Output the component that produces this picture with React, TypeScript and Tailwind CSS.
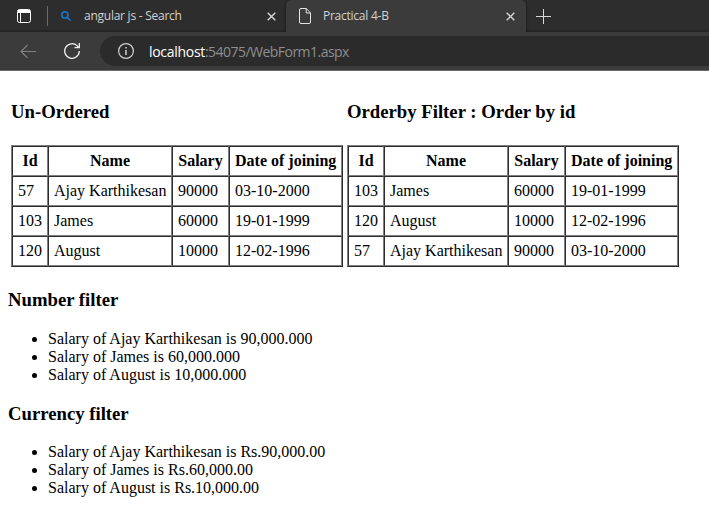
type Employee = { id: number; name: string; salary: string; joined: string };

const employees: Employee[] = [
  { id: 57, name: 'Ajay Karthikesan', salary: '90000', joined: '03-10-2000' },
  { id: 103, name: 'James', salary: '60000', joined: '19-01-1999' },
  { id: 120, name: 'August', salary: '10000', joined: '12-02-1996' },
];

const orderedEmployees = [employees[1], employees[2], employees[0]];

const cell =
  'border border-t-[#2c2c2c] border-l-[#2c2c2c] border-b-[#808080] border-r-[#808080] p-[5px] whitespace-nowrap';

function EmployeeTable({ title, rows }: { title: string; rows: Employee[] }) {
  return (
    <section className="w-[332px]">
      <h3 className="mb-[22px] text-[18.72px] leading-[22px] font-bold whitespace-nowrap">{title}</h3>
      <table className="w-[332px] table-fixed border-separate border-spacing-0 border border-t-[#808080] border-l-[#808080] border-r-[#2c2c2c] border-b-[#2c2c2c] text-[16px] leading-[18px]">
        <colgroup>
          <col className="w-[36px]" />
          <col className="w-[124px]" />
          <col className="w-[57px]" />
          <col className="w-[113px]" />
        </colgroup>
        <thead>
          <tr>
            <th className={cell}>Id</th>
            <th className={cell}>Name</th>
            <th className={cell}>Salary</th>
            <th className={cell}>Date of joining</th>
          </tr>
        </thead>
        <tbody>
          {rows.map((row) => (
            <tr key={row.id}>
              <td className={cell}>{row.id}</td>
              <td className={cell}>{row.name}</td>
              <td className={cell}>{row.salary}</td>
              <td className={cell}>{row.joined}</td>
            </tr>
          ))}
        </tbody>
      </table>
    </section>
  );
}

function FilterList({ title, items, headingGap }: { title: string; items: string[]; headingGap: string }) {
  return (
    <section>
      <h3 className={`${headingGap} text-[18.72px] leading-[22px] font-bold`}>{title}</h3>
      <ul className="list-disc pl-10 text-[16px] leading-[18px]">
        {items.map((item) => (
          <li key={item}>{item}</li>
        ))}
      </ul>
    </section>
  );
}

function CloseIcon() {
  return (
    <svg className="size-[9px]" viewBox="0 0 9 9" fill="none" stroke="#d2d2d2" strokeWidth="1.5">
      <path d="M.7.7l7.6 7.6M8.3.7.7 8.3" />
    </svg>
  );
}

export default function App() {
  return (
    <div className="h-[519px] w-[709px] overflow-hidden bg-white text-black">
      <div className="font-['Open_Sans','Noto_Sans',sans-serif]">
        <div className="flex h-8 items-center bg-[#2b2b2b] bg-linear-to-b from-[#2d2d2d] from-90% to-[#232323] text-[12px] text-[#d2d2d2]">
          <svg className="ml-[17px] h-[14px] w-[14px] shrink-0" viewBox="0 0 14 14" fill="none" stroke="#fff">
            <rect x=".5" y=".5" width="13" height="13" rx="2" />
            <path d="M1 1.5h12M1 2.5h12M1 3.5h12M3.5 4v9.5" />
          </svg>
          <div className="ml-4 h-5 w-px shrink-0 bg-[#6b6b6b]" />
          <div className="flex h-8 w-[238px] shrink-0 items-center pr-[10px] pl-[13px]">
            <svg className="size-[10px]" viewBox="0 0 10 10" fill="none" stroke="#1677cb" strokeWidth="1.6">
              <circle cx="3.9" cy="3.9" r="3.1" />
              <path d="M6.2 6.2l3.4 3.4" />
            </svg>
            <span className="ml-[13px] flex-1 tracking-[-0.25px] whitespace-nowrap">angular js - Search</span>
            <CloseIcon />
          </div>
          <div className="flex h-8 w-[240px] shrink-0 items-center rounded-t-[5px] bg-[#3b3b3b] pr-[11px] pl-[13px] shadow-[0_0_3px_#111]">
            <svg className="h-4 w-3" viewBox="0 0 12 16" fill="none" stroke="#e3e3e3">
              <path d="M2 .5h5.2l4.3 4.3V14a1.5 1.5 0 0 1-1.5 1.5H2A1.5 1.5 0 0 1 .5 14V2A1.5 1.5 0 0 1 2 .5zM7.2.5V5h4.3" />
            </svg>
            <span className="ml-3 flex-1 tracking-[-0.25px] whitespace-nowrap">Practical 4-B</span>
            <CloseIcon />
          </div>
          <svg className="ml-[10px] size-[15px]" viewBox="0 0 15 15" fill="none" stroke="#d8d8d8">
            <path d="M7.5 0v15M0 7.5h15" />
          </svg>
        </div>
        <div className="relative flex h-[39px] items-center border-b border-[#6a6a6a] bg-[#3b3b3b]">
          <svg className="ml-5 h-[14px] w-4 shrink-0" viewBox="0 0 16 14" fill="none" stroke="#808080" strokeWidth="1.1">
            <path d="M16 7.5H1M7.5 1 1 7.5 7.5 14" />
          </svg>
          <svg className="ml-7 size-4 shrink-0" viewBox="0 0 16 16" fill="none" stroke="#f0f0f0" strokeWidth="1.3">
            <path d="M15.3 8A7.3 7.3 0 1 1 13.2 2.9L14.8 4.5M15.3 0v4.6h-4.8" />
          </svg>
          <div className="ml-5 flex h-[30px] flex-1 items-center rounded-l-full bg-[#2b2b2b] pl-[18px]">
            <svg className="size-4 shrink-0" viewBox="0 0 16 16" fill="none" stroke="#d0d0d0" strokeWidth="1.2">
              <circle cx="8" cy="8" r="7.4" />
              <path d="M8 7v5M8 4v1.5" strokeWidth="1.5" />
            </svg>
            <span className="ml-[15px] text-[14px] tracking-[-0.53px] whitespace-nowrap text-[#8e8e8e]">
              <span className="tracking-[-0.3px] text-white">localhost</span>:54075/WebForm1.aspx
            </span>
          </div>
        </div>
      </div>

      <main className="px-2 pt-[30px] font-['Liberation_Serif',serif]">
        <div className="flex gap-1 px-[3px]">
          <EmployeeTable title="Un-Ordered" rows={employees} />
          <EmployeeTable title="Orderby Filter : Order by id" rows={orderedEmployees} />
        </div>
        <div className="mt-[22px] flex flex-col gap-[19px]">
          <FilterList
            title="Number filter"
            headingGap="mb-[19px]"
            items={[
              'Salary of Ajay Karthikesan is 90,000.000',
              'Salary of James is 60,000.000',
              'Salary of August is 10,000.000',
            ]}
          />
          <FilterList
            title="Currency filter"
            headingGap="mb-[18px]"
            items={[
              'Salary of Ajay Karthikesan is Rs.90,000.00',
              'Salary of James is Rs.60,000.00',
              'Salary of August is Rs.10,000.00',
            ]}
          />
        </div>
      </main>
    </div>
  );
}
